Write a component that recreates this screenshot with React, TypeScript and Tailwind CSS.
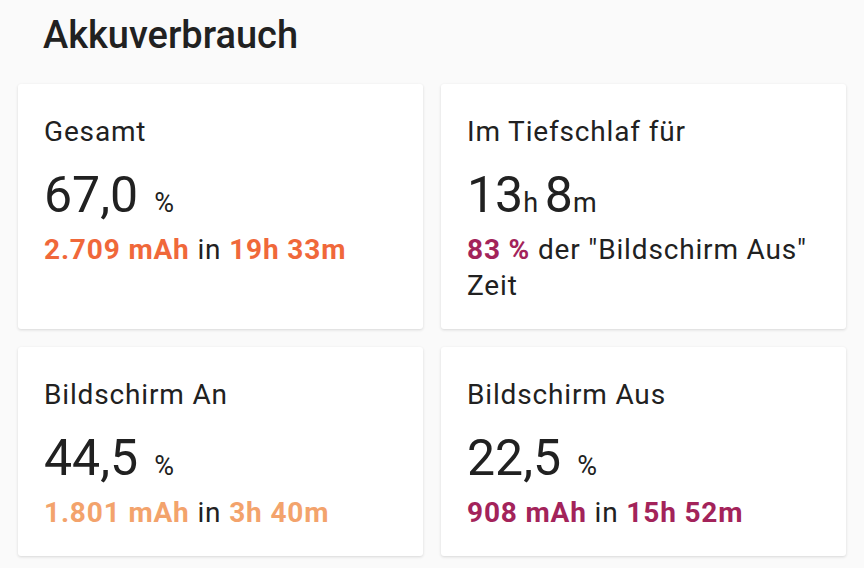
const font = { fontFamily: 'Roboto, "Noto Sans", sans-serif' }

function Card({ label, children }: { label: string; children: React.ReactNode }) {
  return (
    <div className="bg-white rounded-[3px] shadow-[0_1px_3px_rgba(0,0,0,0.14)] pt-[30px] pb-[25px] px-[26px]">
      <div className="text-[28px] leading-[36px] tracking-[0.03em] text-[#212121]">{label}</div>
      {children}
    </div>
  )
}

function Percent({ value }: { value: string }) {
  return (
    <div className="mt-[16px] text-[50px] leading-[58px] text-[#212121]">
      {value}
      <span className="text-[27px] ml-[16px]">%</span>
    </div>
  )
}

function Usage({ mah, time, color }: { mah: string; time: string; color: string }) {
  return (
    <div className="text-[28px] leading-[36px] tracking-[0.03em] text-[#212121]">
      <span className={`font-bold ${color}`}>{mah}</span> in{' '}
      <span className={`font-bold ${color}`}>{time}</span>
    </div>
  )
}

export default function App() {
  return (
    <div className="w-[864px] h-[568px] bg-[#fafafa] px-[18px] pt-[13px] overflow-hidden" style={font}>
      <h1 className="pl-[25px] text-[38px] leading-[45px] font-medium text-[#212121] mb-[26px]">Akkuverbrauch</h1>
      <div className="grid grid-cols-2 gap-[18px]">
        <Card label="Gesamt">
          <Percent value="67,0" />
          <Usage mah="2.709 mAh" time="19h 33m" color="text-[#f0683a]" />
        </Card>
        <Card label="Im Tiefschlaf für">
          <div className="mt-[16px] text-[50px] leading-[58px] text-[#212121]">
            13<span className="text-[27px]">h </span>8<span className="text-[27px]">m</span>
          </div>
          <div className="text-[28px] leading-[36px] tracking-[0.03em] text-[#212121]">
            <span className="font-bold text-[#a3235a]">83 %</span> der "Bildschirm Aus" Zeit
          </div>
        </Card>
        <Card label="Bildschirm An">
          <Percent value="44,5" />
          <Usage mah="1.801 mAh" time="3h 40m" color="text-[#f3a36c]" />
        </Card>
        <Card label="Bildschirm Aus">
          <Percent value="22,5" />
          <Usage mah="908 mAh" time="15h 52m" color="text-[#a3235a]" />
        </Card>
      </div>
    </div>
  )
}
